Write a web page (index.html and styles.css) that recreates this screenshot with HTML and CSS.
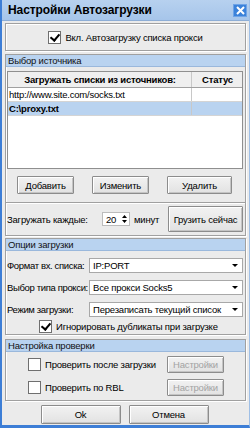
FILE: index.html
```html
<!DOCTYPE html>
<html lang="ru">
<head>
    <meta charset="UTF-8">
    <title>Настройки Автозагрузки</title>
    <link rel="stylesheet" href="styles.css">
</head>
<body>
    <div class="window">
        <div class="titlebar">
            <span class="title">Настройки Автозагрузки</span>
            <span class="close-btn">
                <svg width="9" height="9" viewBox="0 0 9 9"><path d="M1 1 L8 8 M8 1 L1 8" stroke="#fff" stroke-width="2"/></svg>
            </span>
        </div>

        <div class="content">
            <div class="group group-enable">
                <label class="check"><span class="box checked"></span>Вкл. Автозагрузку списка прокси</label>
            </div>

            <div class="group group-source">
                <div class="group-header">Выбор источника</div>
                <div class="table">
                    <div class="row head">
                        <div class="cell c-src">Загружать списки из источников:</div>
                        <div class="cell c-status">Статус</div>
                    </div>
                    <div class="row">
                        <div class="cell c-src">http://www.site.com/socks.txt</div>
                        <div class="cell c-status"></div>
                    </div>
                    <div class="row selected">
                        <div class="cell c-src">C:\proxy.txt</div>
                        <div class="cell c-status"></div>
                    </div>
                </div>
                <div class="btn-row">
                    <button class="btn btn-add">Добавить</button>
                    <button class="btn btn-edit">Изменить</button>
                    <button class="btn btn-del">Удалить</button>
                </div>
                <div class="load-row">
                    <span class="load-label">Загружать каждые:</span>
                    <span class="spinner">
                        <span class="spin-value">20</span>
                        <span class="spin-arrows">
                            <svg width="5" height="10" viewBox="0 0 5 10"><path d="M0 4 L2.5 1 L5 4 Z M0 6 L2.5 9 L5 6 Z" fill="#000"/></svg>
                        </span>
                    </span>
                    <span class="minutes">минут</span>
                    <button class="btn btn-now">Грузить сейчас</button>
                </div>
            </div>

            <div class="group group-options">
                <div class="group-header">Опции загрузки</div>
                <div class="field">
                    <span class="field-label">Формат вх. списка:</span>
                    <span class="select"><span class="select-text">IP:PORT</span><span class="arrow"></span></span>
                </div>
                <div class="field">
                    <span class="field-label">Выбор типа прокси:</span>
                    <span class="select"><span class="select-text">Все прокси Socks5</span><span class="arrow"></span></span>
                </div>
                <div class="field">
                    <span class="field-label">Режим загрузки:</span>
                    <span class="select"><span class="select-text">Перезаписать текущий список</span><span class="arrow"></span></span>
                </div>
                <label class="check check-dup"><span class="box checked"></span>Игнорировать дубликаты при загрузке</label>
            </div>

            <div class="group group-check">
                <div class="group-header">Настройка проверки</div>
                <div class="check-row">
                    <label class="check"><span class="box"></span>Проверить после загрузки</label>
                    <button class="btn btn-settings" disabled>Настройки</button>
                </div>
                <div class="check-row">
                    <label class="check"><span class="box"></span>Проверить по RBL</label>
                    <button class="btn btn-settings" disabled>Настройки</button>
                </div>
            </div>

            <div class="dialog-buttons">
                <button class="btn btn-dialog">Ok</button>
                <button class="btn btn-dialog">Отмена</button>
            </div>
        </div>
    </div>
</body>
</html>
```

FILE: styles.css
```css
:root {
    --frame: #3d7ed6;
    --face: #ebebeb;
    --edge: #a0a0a0;
    --header: #b9d3f0;
    --select-row: #b9d3f0;
}

* {
    box-sizing: border-box;
    margin: 0;
    padding: 0;
}

body {
    width: 250px;
    height: 428px;
    font-family: 'Liberation Sans', Arial, sans-serif;
    font-size: 9.5px;
    letter-spacing: -0.2px;
    color: #000;
    background: var(--face);
    white-space: nowrap;
}

.window {
    width: 250px;
    height: 428px;
    display: flex;
    flex-direction: column;
    background: var(--face);
    border-left: 2px solid var(--frame);
    border-right: 1px solid #9fbfe6;
    border-bottom: 3px solid var(--frame);
    overflow: hidden;
}

.titlebar {
    height: 21px;
    flex: none;
    display: flex;
    align-items: center;
    justify-content: space-between;
    padding: 0 2px 0 6px;
    background: linear-gradient(#b7d1ef, #a6c5ea);
    border-bottom: 1px solid #8eaed6;
}

.title {
    font-weight: bold;
    font-size: 12px;
    letter-spacing: -0.1px;
}

.close-btn {
    width: 14px;
    height: 13px;
    display: flex;
    align-items: center;
    justify-content: center;
    background: #3b82da;
    border: 1px solid #6ea3e6;
}

.content {
    flex: 1;
    display: flex;
    flex-direction: column;
    padding: 2px 3px 0 3px;
}

.group {
    border: 1px solid var(--edge);
    box-shadow: inset 1px 1px 0 #fff, 1px 1px 0 #fff;
    display: flex;
    flex-direction: column;
}

.group-header {
    height: 12px;
    line-height: 11px;
    padding-left: 2px;
    background: var(--header);
    border-bottom: 1px solid #9ab8dc;
    color: #111;
}

/* checkbox */

.check {
    display: flex;
    align-items: center;
    gap: 4px;
}

.box {
    width: 13px;
    height: 13px;
    flex: none;
    background: #fff;
    border: 1px solid #6f6f6f;
    position: relative;
}

.box.checked::after {
    content: "";
    position: absolute;
    left: 3px;
    top: 0px;
    width: 4px;
    height: 7px;
    border: solid #000;
    border-width: 0 2px 2px 0;
    transform: rotate(40deg);
}

.group-enable {
    height: 28px;
    align-items: center;
    justify-content: center;
}

/* source group */

.group-source {
    margin-top: 3px;
    height: 182px;
}

.table {
    margin: 4px 2px 0 1px;
    height: 98px;
    background: #fff;
    border: 1px solid #8f8f8f;
}

.row {
    display: flex;
    height: 14px;
    border-bottom: 1px solid #d4d4d4;
}

.row.head {
    height: 16px;
    background: #efefef;
    border-bottom: 1px solid #a0a0a0;
    font-weight: bold;
}

.row.selected {
    background: var(--select-row);
    font-weight: bold;
}

.cell {
    line-height: 13px;
    padding-left: 1px;
    overflow: hidden;
}

.row.head .cell {
    line-height: 15px;
    text-align: center;
}

.c-src {
    width: 184px;
    flex: none;
    border-right: 1px solid #c8c8c8;
}

.c-status {
    flex: 1;
}

.btn {
    font-family: 'Liberation Sans', Arial, sans-serif;
    font-size: 9.5px;
    letter-spacing: -0.2px;
    color: #000;
    background: linear-gradient(#f2f2f2, #e2e2e2);
    border: 1px solid #8c8c8c;
    box-shadow: inset 1px 1px 0 #fff, inset -1px -1px 0 #c4c4c4;
    border-radius: 1px;
    white-space: nowrap;
}

.btn-row {
    display: flex;
    margin-top: 7px;
    padding-left: 11px;
    height: 18px;
}

.btn-add { width: 57px; }
.btn-edit { width: 57px; margin-left: 18px; }
.btn-del { width: 65px; margin-left: 18px; }

.load-row {
    margin-top: 8px;
    border-top: 1px solid var(--edge);
    box-shadow: inset 0 1px 0 #fff;
    flex: 1;
    display: flex;
    align-items: center;
    padding: 2px 2px 2px 1px;
}

.load-label {
    width: 95px;
}

.spinner {
    width: 28px;
    height: 14px;
    display: flex;
    align-items: center;
    justify-content: space-between;
    background: #fff;
    border: 1px solid #bcbcbc;
    padding: 0 2px 0 3px;
}

.spin-arrows {
    display: flex;
}

.minutes {
    margin-left: 4px;
}

.btn-now {
    margin-left: auto;
    width: 75px;
    height: 26px;
}

/* options group */

.group-options {
    margin-top: 2px;
    height: 97px;
}

.field {
    display: flex;
    align-items: center;
    height: 15px;
    margin-top: 7px;
    padding-left: 1px;
}

.field + .field {
    margin-top: 7px;
}

.field-label {
    width: 82px;
    flex: none;
    letter-spacing: -0.35px;
}

.select {
    width: 154px;
    height: 15px;
    display: flex;
    align-items: center;
    justify-content: space-between;
    background: #fff;
    border: 1px solid #a8a8a8;
    padding-left: 3px;
}

.arrow {
    width: 0;
    height: 0;
    margin-right: 4px;
    border-left: 3px solid transparent;
    border-right: 3px solid transparent;
    border-top: 3px solid #000;
}

.check-dup {
    margin-top: 3px;
    padding-left: 33px;
    height: 13px;
}

/* check group */

.group-check {
    margin-top: 4px;
    height: 62px;
}

.check-row {
    display: flex;
    align-items: center;
    justify-content: space-between;
    padding: 0 21px 0 22px;
    margin-top: 4px;
    height: 17px;
}

.check-row + .check-row {
    margin-top: 6px;
}

.btn-settings {
    width: 57px;
    height: 17px;
    color: #a3a3a3;
}

.dialog-buttons {
    display: flex;
    justify-content: center;
    gap: 8px;
    margin-top: 4px;
    padding-right: 2px;
}

.btn-dialog {
    width: 80px;
    height: 19px;
}
```
